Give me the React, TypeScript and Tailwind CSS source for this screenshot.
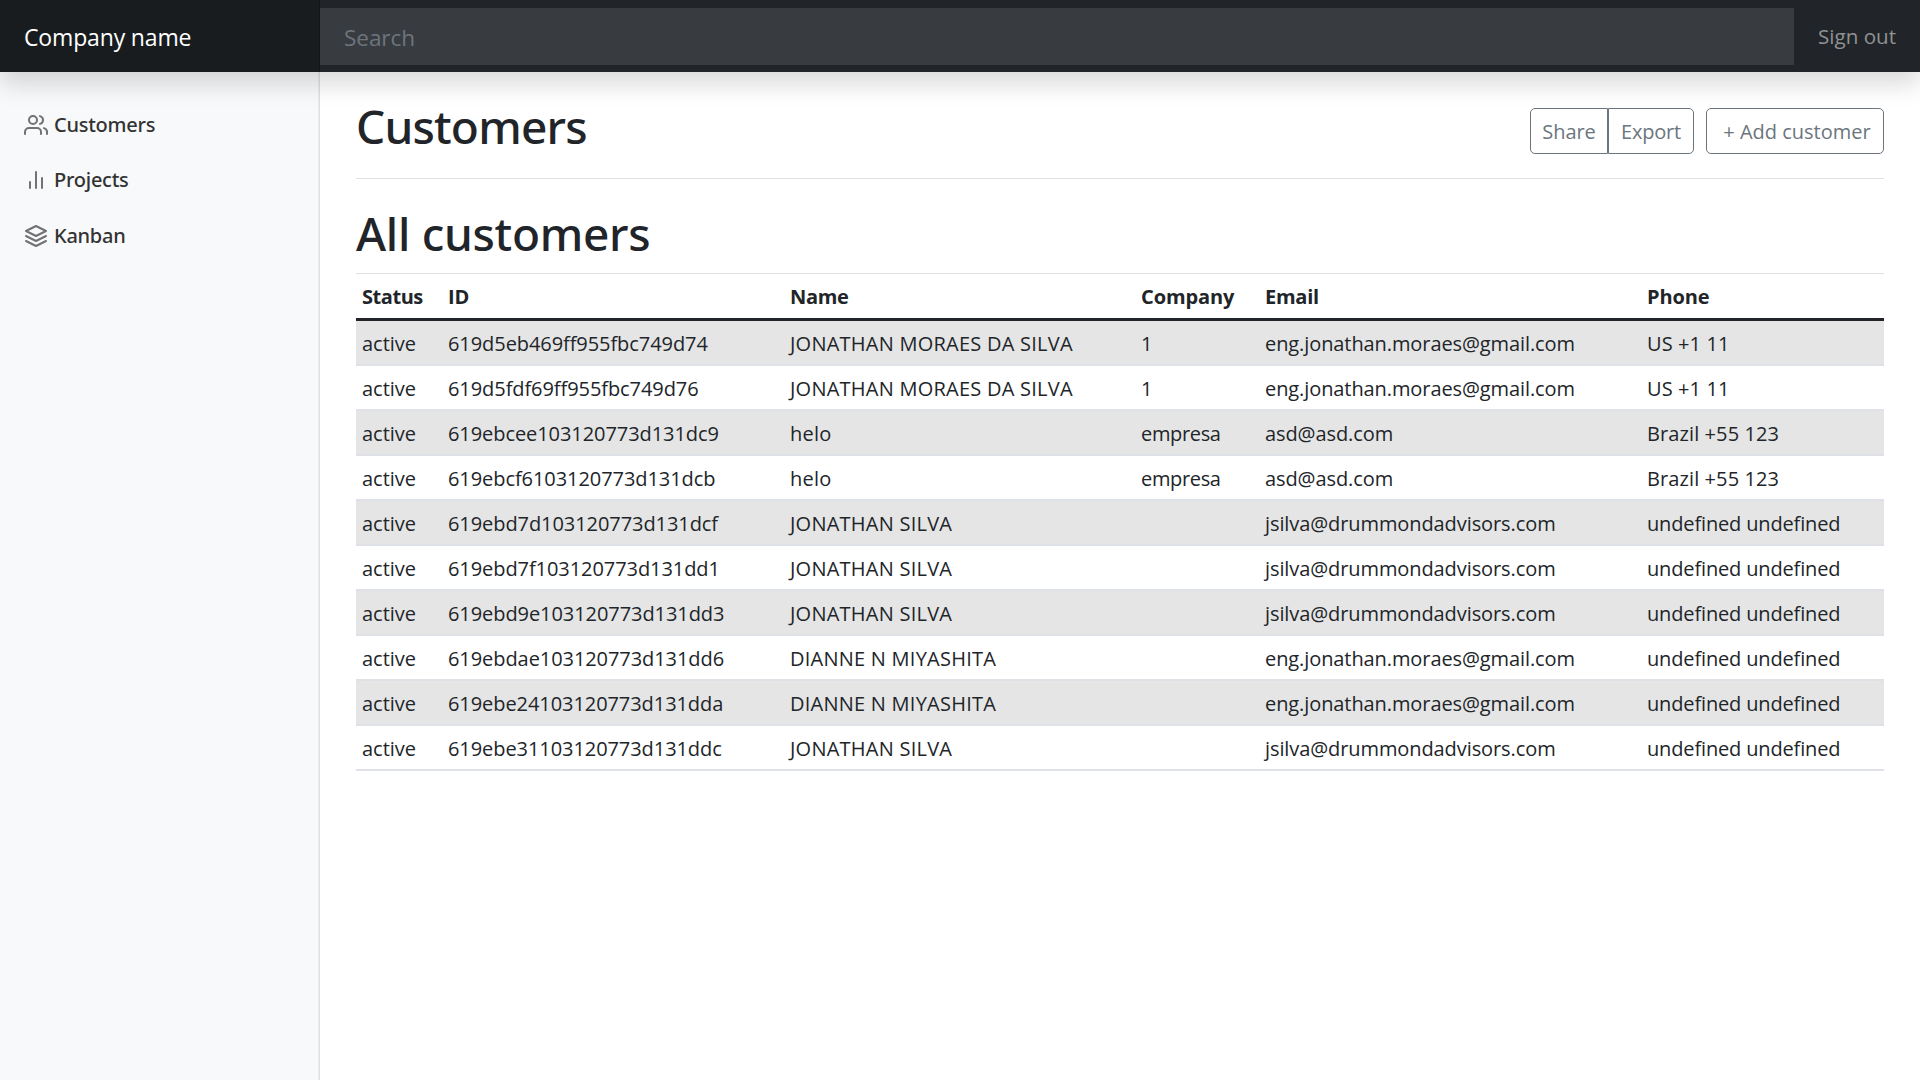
import React from "react";

type Customer = { id: string; name: string; company: string; email: string; phone: string };

const customers: Customer[] = [
  { id: "619d5eb469ff955fbc749d74", name: "JONATHAN MORAES DA SILVA", company: "1", email: "eng.jonathan.moraes@gmail.com", phone: "US +1 11" },
  { id: "619d5fdf69ff955fbc749d76", name: "JONATHAN MORAES DA SILVA", company: "1", email: "eng.jonathan.moraes@gmail.com", phone: "US +1 11" },
  { id: "619ebcee103120773d131dc9", name: "helo", company: "empresa", email: "asd@asd.com", phone: "Brazil +55 123" },
  { id: "619ebcf6103120773d131dcb", name: "helo", company: "empresa", email: "asd@asd.com", phone: "Brazil +55 123" },
  { id: "619ebd7d103120773d131dcf", name: "JONATHAN SILVA", company: "", email: "jsilva@drummondadvisors.com", phone: "undefined undefined" },
  { id: "619ebd7f103120773d131dd1", name: "JONATHAN SILVA", company: "", email: "jsilva@drummondadvisors.com", phone: "undefined undefined" },
  { id: "619ebd9e103120773d131dd3", name: "JONATHAN SILVA", company: "", email: "jsilva@drummondadvisors.com", phone: "undefined undefined" },
  { id: "619ebdae103120773d131dd6", name: "DIANNE N MIYASHITA", company: "", email: "eng.jonathan.moraes@gmail.com", phone: "undefined undefined" },
  { id: "619ebe24103120773d131dda", name: "DIANNE N MIYASHITA", company: "", email: "eng.jonathan.moraes@gmail.com", phone: "undefined undefined" },
  { id: "619ebe31103120773d131ddc", name: "JONATHAN SILVA", company: "", email: "jsilva@drummondadvisors.com", phone: "undefined undefined" },
];

const columns = [
  { label: "Status", className: "w-[86px] tracking-[-0.45px]" },
  { label: "ID", className: "w-[342px]" },
  { label: "Name", className: "w-[351px] tracking-[-0.35px]" },
  { label: "Company", className: "w-[124px] tracking-[-0.1px]" },
  { label: "Email", className: "w-[382px] tracking-[-0.25px]" },
  { label: "Phone", className: "w-[243px] tracking-[-0.15px]" },
];

function Icon({ children }: { children: React.ReactNode }) {
  return (
    <svg
      className="size-6 shrink-0 text-[#727272]"
      viewBox="0 0 24 24"
      fill="none"
      stroke="currentColor"
      strokeWidth="2"
      strokeLinecap="round"
      strokeLinejoin="round"
    >
      {children}
    </svg>
  );
}

const navItems = [
  {
    label: "Customers",
    icon: (
      <Icon>
        <path d="M17 21v-2a4 4 0 0 0-4-4H5a4 4 0 0 0-4 4v2" />
        <circle cx="9" cy="7" r="4" />
        <path d="M23 21v-2a4 4 0 0 0-3-3.87" />
        <path d="M16 3.13a4 4 0 0 1 0 7.75" />
      </Icon>
    ),
  },
  {
    label: "Projects",
    icon: (
      <Icon>
        <line x1="18" y1="20" x2="18" y2="10" />
        <line x1="12" y1="20" x2="12" y2="4" />
        <line x1="6" y1="20" x2="6" y2="14" />
      </Icon>
    ),
  },
  {
    label: "Kanban",
    icon: (
      <Icon>
        <polygon points="12 2 2 7 12 12 22 7 12 2" />
        <polyline points="2 17 12 22 22 17" />
        <polyline points="2 12 12 17 22 12" />
      </Icon>
    ),
  },
];

function Header() {
  return (
    <header className="relative z-10 flex h-[72px] items-stretch bg-[#212529] shadow-[0_12px_24px_rgba(0,0,0,0.15)]">
      <a className="flex w-80 items-center bg-[#191c1f] pb-px pl-6 pt-0.5 text-[23px] leading-9 tracking-[-0.15px] text-white shadow-[inset_-1px_0_0_rgba(0,0,0,0.25)]">
        Company name
      </a>
      <input
        className="mb-[7px] mt-2 min-w-0 flex-1 bg-[#383b3f] px-6 pt-0.5 text-[22.6px] tracking-[-0.1px] text-white outline-none placeholder:text-[#6c757d]"
        placeholder="Search"
      />
      <a className="flex w-[126px] items-center pl-6 text-[20.6px] text-[#909294]">Sign out</a>
    </header>
  );
}

function Sidebar() {
  return (
    <nav className="w-80 bg-[#f8f9fa] pt-[25px] shadow-[inset_-1.5px_0_0_rgba(0,0,0,0.1)]">
      <ul>
        {navItems.map((item) => (
          <li key={item.label} className="flex h-[55.6px] items-center gap-1.5 pl-6 font-['Noto_Sans',sans-serif] text-xl font-medium tracking-[-0.25px] text-[#333]">
            {item.icon}
            {item.label}
          </li>
        ))}
      </ul>
    </nav>
  );
}

function CustomerTable() {
  return (
    <table className="w-[1528px] table-fixed border-separate border-spacing-0 text-left text-xl leading-[30px]">
      <thead>
        <tr>
          {columns.map((c) => (
            <th key={c.label} className={`h-12 border-b-[3px] border-t border-b-[#212529] border-t-[#dee2e6] px-1.5 pb-0 pt-0.5 font-bold ${c.className}`}>
              {c.label}
            </th>
          ))}
        </tr>
      </thead>
      <tbody className="[&_td]:h-[45px] [&_td]:border-b-2 [&_td]:border-[#dee2e6] [&_td]:px-1.5 [&_td]:pb-0 [&_td]:pt-0.5">
        {customers.map((c) => (
          <tr key={c.id} className="odd:bg-[#e5e5e5]">
            <td>active</td>
            <td className="tracking-[-0.07px]">{c.id}</td>
            <td className="tracking-[0.24px]">{c.name}</td>
            <td className="tracking-[-0.35px]">{c.company}</td>
            <td className="tracking-[-0.09px]">{c.email}</td>
            <td className={c.phone.startsWith("undefined") ? "tracking-[-0.15px]" : "tracking-[0.1px]"}>{c.phone}</td>
          </tr>
        ))}
      </tbody>
    </table>
  );
}

export default function App() {
  return (
    <div className="flex h-screen flex-col overflow-hidden bg-white font-['Open_Sans',sans-serif] text-[#212529]">
      <Header />
      <div className="flex flex-1">
        <Sidebar />
        <main className="flex-1 px-9 pt-6">
          <div className="flex h-[83px] items-start justify-between border-b border-[#dee2e6]">
            <h1 className="font-['Noto_Sans',sans-serif] text-[46px] font-medium leading-[60px] tracking-[-0.8px]">Customers</h1>
            <div className="mt-3 flex h-[46px] gap-3 text-xl text-[#6c757d]">
              <div className="flex">
                <button className="w-[78px] rounded-l-[5px] border border-[#6c757d] pt-0.5 tracking-[-0.1px]">Share</button>
                <button className="w-[86px] rounded-r-[5px] border border-[#6c757d] pt-0.5 tracking-[-0.2px]">Export</button>
              </div>
              <button className="w-[178px] rounded-[5px] border border-[#6c757d] pl-1 pt-0.5">+ Add customer</button>
            </div>
          </div>
          <h2 className="mb-[10px] mt-6 font-['Noto_Sans',sans-serif] text-[46px] font-medium leading-[60px] tracking-[-0.3px]">All customers</h2>
          <CustomerTable />
        </main>
      </div>
    </div>
  );
}
